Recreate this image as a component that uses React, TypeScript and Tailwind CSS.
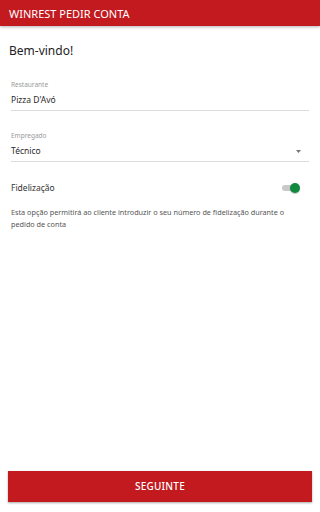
import React, { useState } from 'react';

const App: React.FC = () => {
    const [loyalty, setLoyalty] = useState(true);

    return (
        <div className="w-[320px] h-[512px] bg-white flex flex-col" style={{ fontFamily: '"Noto Sans", "Open Sans", sans-serif' }}>
            <div className="h-[26px] bg-[#c21a1f] flex items-center px-[9px] shadow-[0_1px_3px_rgba(0,0,0,0.3)]">
                <span className="text-white text-[11px] leading-none">WINREST PEDIR CONTA</span>
            </div>

            <div className="flex-1 flex flex-col">
                <h1 className="mt-[17px] px-[9px] text-[12px] leading-[16px] text-[#222]">Bem-vindo!</h1>

                <div className="mt-[22px] mx-[11px] border-b border-[#dcdcdc] pb-[4px]">
                    <div className="text-[6.5px] leading-[8px] text-[#9a9a9a]">Restaurante</div>
                    <div className="mt-[5px] text-[8.5px] leading-[12px] text-[#2a2a2a]">Pizza D'Avó</div>
                </div>

                <div className="mt-[21px] mx-[11px] border-b border-[#dcdcdc] pb-[4px]">
                    <div className="text-[6.5px] leading-[8px] text-[#9a9a9a]">Empregado</div>
                    <div className="mt-[5px] flex items-center justify-between text-[8.5px] leading-[12px] text-[#2a2a2a]">
                        <span>Técnico</span>
                        <svg width="5" height="3" viewBox="0 0 5 3" className="mr-[8px]">
                            <path d="M0 0h5L2.5 3z" fill="#777" />
                        </svg>
                    </div>
                </div>

                <div className="mt-[20px] ml-[11px] mr-[20px] h-[12px] flex items-center justify-between">
                    <span className="text-[8.5px] leading-[12px] text-[#333]">Fidelização</span>
                    <button
                        onClick={() => setLoyalty(!loyalty)}
                        className="relative w-[18px] h-[10px] flex items-center"
                    >
                        <span className="block w-[15px] h-[6px] rounded-full bg-[#c9c9c9]" />
                        <span
                            className={`absolute top-[0px] w-[10px] h-[10px] rounded-full shadow-[0_1px_1px_rgba(0,0,0,0.25)] ${loyalty ? 'left-[8px] bg-[#0f8a3e]' : 'left-[-2px] bg-[#f1f1f1]'}`}
                        />
                    </button>
                </div>

                <p className="mt-[12px] mx-[11px] text-[7.25px] leading-[12px] text-[#555] pr-[10px]">
                    Esta opção permitirá ao cliente introduzir o seu número de fidelização durante o pedido de conta
                </p>
            </div>

            <div className="px-[8px] pb-[10px]">
                <button className="w-full h-[31px] bg-[#c21a1f] text-white text-[10px] font-medium tracking-[0.2px] shadow-[0_1px_2px_rgba(0,0,0,0.35)]">
                    SEGUINTE
                </button>
            </div>
        </div>
    );
};

export default App;
